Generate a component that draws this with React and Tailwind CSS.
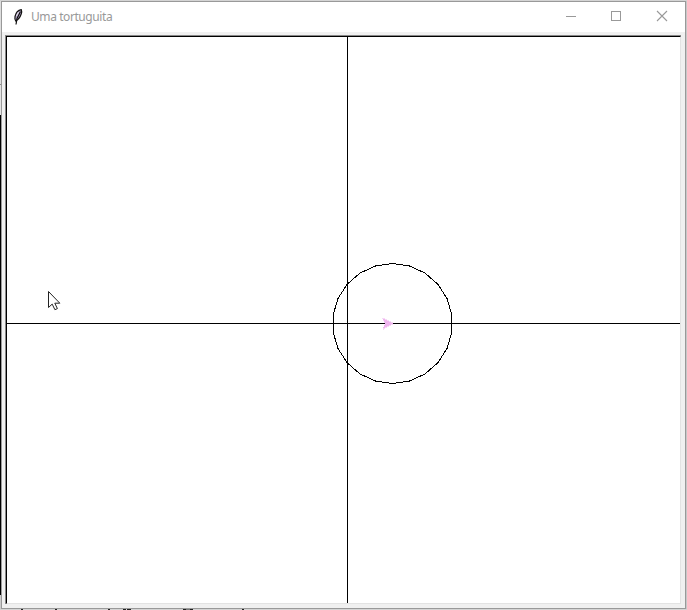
const CENTER = { x: 385.5, y: 286.5 };
const RADIUS = 60;
const SIDES = 22;

// The turtle approximates its circle with a regular polygon.
const circlePoints = Array.from({ length: SIDES }, (_, i) => {
  const a = (i * 2 * Math.PI) / SIDES;
  return `${(CENTER.x + RADIUS * Math.sin(a)).toFixed(2)},${(CENTER.y + RADIUS * Math.cos(a)).toFixed(2)}`;
}).join(" ");

function Feather() {
  return (
    <svg className="ml-[10px] h-[18px] w-[12px]" viewBox="0 0 12 18">
      <path d="M9.3 1.7C6 2.300 3.800 5 3 8.500c-.4 2 0 3.300.7 4.500C6.500 11.500 8.200 9 9.200 6c.6-2 .6-3.300.1-4.300z" fill="#b3a6c8" stroke="#111" strokeWidth="1.200" />
      <path d="M8.500 3.500 5 10.500 4 16.500" fill="none" stroke="#111" strokeWidth="1.200" />
      <path d="M6.500 4 4.500 8" stroke="#e8e4ee" strokeWidth="1" />
    </svg>
  );
}

function TitleBar() {
  return (
    <div className="flex h-[30px] shrink-0 items-center bg-white">
      <Feather />
      <span className="ml-[7px] font-['Noto_Sans','Open_Sans',sans-serif] text-[12px] leading-[16px] tracking-[-0.42px] text-[#999]">Uma tortuguita</span>
      <div className="ml-auto flex h-full text-[#999]">
        <svg className="h-[30px] w-[45px]" viewBox="0 0 45 30" shapeRendering="crispEdges">
          <path d="M17 14.500h10" stroke="currentColor" />
        </svg>
        <svg className="h-[30px] w-[45px]" viewBox="0 0 45 30" shapeRendering="crispEdges">
          <path d="M17.500 9.500h9v9h-9z" fill="none" stroke="currentColor" />
        </svg>
        <svg className="h-[30px] w-[46px]" viewBox="0 0 46 30">
          <path d="M18 9l10 10M28 9 18 19" stroke="currentColor" strokeWidth="1.1" />
        </svg>
      </div>
    </div>
  );
}

function TurtleCanvas() {
  return (
    <svg className="block h-[566px] w-[673px]" viewBox="0 0 673 566">
      <g fill="none" stroke="#000" shapeRendering="crispEdges">
        <path d="M0 286.500h673M340.500 0v566" />
        <polygon points={circlePoints} />
      </g>
      <path d="M386 286.500 375.500 281 378.500 286.500 375.500 292z" fill="#eeb4ee" stroke="#eeb4ee" strokeWidth="0.5" shapeRendering="crispEdges" />
      <path d="M41.500 254.500v16l3.700-3.400 2.700 5.600 2.500-1.100-2.600-5.400h5z" fill="#fff" stroke="#222" strokeWidth="1" />
    </svg>
  );
}

export default function App() {
  return (
    <div className="flex h-[610px] w-[687px] flex-col overflow-hidden bg-[#d4d4d4] pt-px">
      <div className="flex h-[608px]">
        <div className="flex w-px shrink-0 flex-col">
          <div className="h-[83px] bg-[#dedede]" />
          <div className="h-px bg-[#888]" />
          <div className="h-[30px] bg-[#e4e4e4]" />
          <div className="h-[480px] bg-black" />
          <div className="grow bg-[#ccc]" />
        </div>
        <div className="flex w-[685px] shrink-0 flex-col border border-[#999] bg-[#f0f0f0]">
          <TitleBar />
          <div className="ml-[3px] mt-[3px] w-[676px] border-l border-t border-[#888]">
            <div className="border-b border-l border-r border-t border-b-[#e3e3e3] border-l-black border-r-[#e3e3e3] border-t-black bg-white">
              <TurtleCanvas />
            </div>
          </div>
        </div>
        <div className="w-px shrink-0 bg-[#c8c8c8]" />
      </div>
      <svg className="h-px w-full shrink-0" viewBox="0 0 687 1" shapeRendering="crispEdges">
        <path d="M21 .5h2M55 .5h2M108 .5h2M123 .5h3M127 .5h4M183 .5h3M190 .5h3M242 .5h2" stroke="#222" />
        <path d="M186 .5h4" stroke="#777" />
      </svg>
    </div>
  );
}
